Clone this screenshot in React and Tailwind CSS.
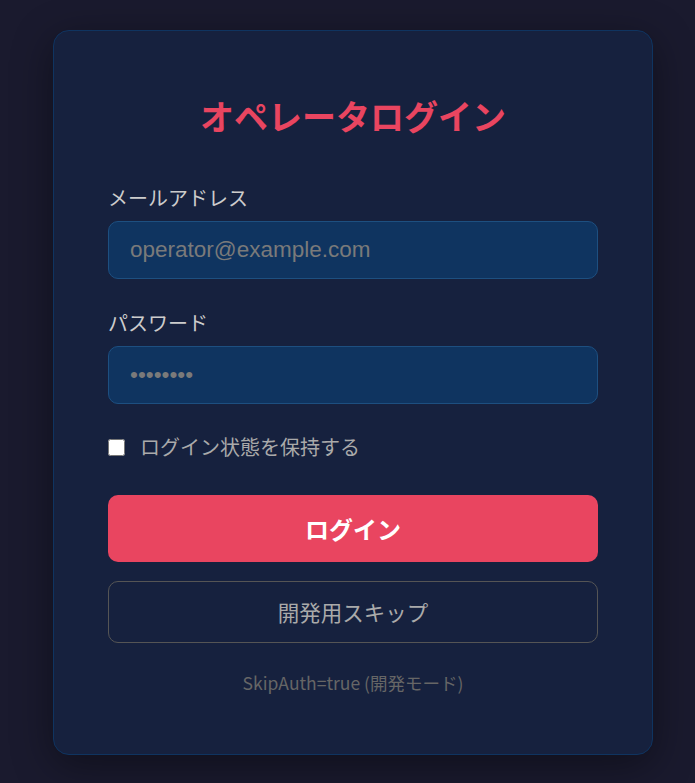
import React from "react";

export default function App() {
  const jp = { fontFamily: '"Noto Sans CJK JP", "Noto Sans", sans-serif' };
  return (
    <div className="min-h-[783px] w-full bg-[#1a1a2e] pt-[30px] pb-[30px]" style={jp}>
      <div className="ml-[53px] w-[600px] rounded-[16px] border border-[#0f3460] bg-[#16213e] px-[54px] pt-[61px] pb-[59px] shadow-[0_10px_40px_rgba(0,0,0,0.4)]">
        <h1 className="h-[48px] text-center text-[34px] font-bold leading-[48px] text-[#e94560]">
          オペレータログイン
        </h1>
        <label className="mt-[44px] block text-[20px] leading-[28px] text-[#cccccc]">メールアドレス</label>
        <input
          type="email"
          placeholder="operator@example.com"
          className="mt-[9px] block h-[58px] w-full rounded-[10px] border border-[#1d4f80] bg-[#0f3460] px-[21px] text-[22.5px] text-white outline-none placeholder:text-[#7a7a7a]"
          style={{ fontFamily: '"Liberation Sans", Arial, sans-serif' }}
        />
        <label className="mt-[30px] block text-[20px] leading-[28px] text-[#cccccc]">パスワード</label>
        <input
          type="password"
          placeholder="••••••••"
          className="mt-[9px] block h-[58px] w-full rounded-[10px] border border-[#1d4f80] bg-[#0f3460] px-[21px] text-[22.5px] text-white outline-none placeholder:text-[#7a7a7a]"
          style={{ fontFamily: '"Liberation Sans", Arial, sans-serif' }}
        />
        <div className="mt-[29px] flex h-[28px] items-center">
          <input type="checkbox" className="h-[17px] w-[17px] accent-white" />
          <span className="ml-[15px] text-[20px] leading-[28px] text-[#aaaaaa]">ログイン状態を保持する</span>
        </div>
        <button className="mt-[34px] block h-[67px] w-full rounded-[10px] bg-[#e94560] text-[24px] font-bold text-white">
          ログイン
        </button>
        <button className="mt-[19px] block h-[62px] w-full rounded-[10px] border border-[#555555] bg-transparent text-[21.5px] text-[#aaaaaa]">
          開発用スキップ
        </button>
        <p className="mt-[28px] text-center text-[17.5px] leading-[24px] text-[#666666]">
          SkipAuth=true (開発モード)
        </p>
      </div>
    </div>
  );
}
